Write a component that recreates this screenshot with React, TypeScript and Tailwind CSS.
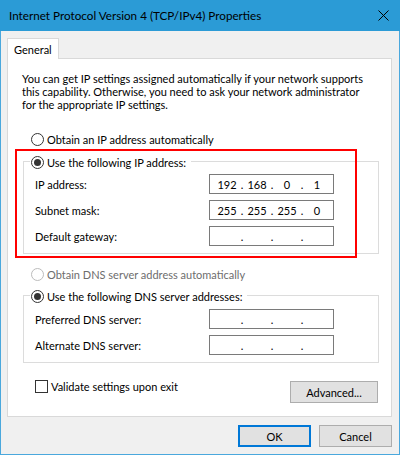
const FONT = "font-['Lato','Noto_Sans',sans-serif]";

type Octets = [string, string, string, string];

function Radio({ checked = false, disabled = false }: { checked?: boolean; disabled?: boolean }) {
  return (
    <span
      className={
        "flex h-[13px] w-[13px] shrink-0 items-center justify-center rounded-full border bg-white " +
        (disabled ? "border-[#bcbcbc]" : "border-[#333333]")
      }
    >
      {checked && <span className="h-[7px] w-[7px] rounded-full bg-[#333333]" />}
    </span>
  );
}

function IpBox({ value = ["", "", "", ""] }: { value?: Octets }) {
  return (
    <div className="flex h-[20px] w-[125px] items-center border border-[#7a7a7a] bg-white pl-[4px]">
      {value.map((o, i) => (
        <div key={i} className="flex items-center">
          <span className="w-[26px] text-center">{o}</span>
          {i < 3 && <span className="w-[4px] text-center">.</span>}
        </div>
      ))}
    </div>
  );
}

function FieldRow({ label, value }: { label: string; value?: Octets }) {
  return (
    <div className="flex h-[20px] items-center">
      <span className="ml-[11px] w-[174px]">{label}</span>
      <IpBox value={value} />
    </div>
  );
}

function Button({ children, primary = false, className = "" }: { children: string; primary?: boolean; className?: string }) {
  return (
    <div
      className={
        "flex items-center justify-center bg-[#e1e1e1] " +
        (primary ? "border-2 border-[#0078d7] " : "border border-[#adadad] ") +
        className
      }
    >
      {children}
    </div>
  );
}

export default function App() {
  return (
    <div className={`flex h-[455px] w-[400px] flex-col bg-[#f0f0f0] text-[11px] leading-[13px] text-black ${FONT}`}>
      {/* title bar */}
      <div className="flex h-[31px] shrink-0 items-center justify-between bg-[#2b9bd6] pl-[9px] pr-[11px]">
        <span className="text-[11.7px]">Internet Protocol Version 4 (TCP/IPv4) Properties</span>
        <svg width="11" height="11" viewBox="0 0 11 11" className="mt-[-1px]">
          <path d="M0.5 0.5 L10.5 10.5 M10.5 0.5 L0.5 10.5" stroke="#000" strokeWidth="1" />
        </svg>
      </div>

      <div className="flex flex-1 flex-col border-x border-b border-[#4aa8dd] pl-[6px] pr-[7px] pt-[7px]">
        {/* tab */}
        <div className="relative z-10 -mb-px flex h-[21px] w-[52px] items-center border border-b-0 border-[#d9d9d9] bg-white pl-[6px]">
          General
        </div>

        {/* tab page */}
        <div className="relative flex h-[359px] flex-col border border-[#d9d9d9] bg-white">
          <p className="ml-[14px] mt-[13px] whitespace-nowrap">
            You can get IP settings assigned automatically if your network supports
            <br />
            this capability. Otherwise, you need to ask your network administrator
            <br />
            for the appropriate IP settings.
          </p>

          <div className="ml-[23px] mt-[22px] flex h-[13px] items-center gap-[3px]">
            <Radio />
            <span>Obtain an IP address automatically</span>
          </div>

          <div className="ml-[15px] mt-[15px] h-[93px] w-[356px] border border-[#dcdcdc]">
            <div className="-mt-[6px] ml-[6px] flex h-[13px] w-fit items-center gap-[3px] bg-white pl-[1px] pr-[5px]">
              <Radio checked />
              <span>Use the following IP address:</span>
            </div>
            <div className="mt-[5px] flex flex-col gap-[6px]">
              <FieldRow label="IP address:" value={["192", "168", "0", "1"]} />
              <FieldRow label="Subnet mask:" value={["255", "255", "255", "0"]} />
              <FieldRow label="Default gateway:" />
            </div>
          </div>

          <div className="ml-[23px] mt-[14px] flex h-[13px] items-center gap-[3px] text-[#6d6d6d]">
            <Radio disabled />
            <span>Obtain DNS server address automatically</span>
          </div>

          <div className="ml-[15px] mt-[14px] h-[68px] w-[356px] border border-[#dcdcdc]">
            <div className="-mt-[6px] ml-[6px] flex h-[13px] w-fit items-center gap-[3px] bg-white pl-[1px] pr-[5px]">
              <Radio checked />
              <span>Use the following DNS server addresses:</span>
            </div>
            <div className="mt-[6px] flex flex-col gap-[6px]">
              <FieldRow label="Preferred DNS server:" />
              <FieldRow label="Alternate DNS server:" />
            </div>
          </div>

          <div className="mt-[17px] flex items-start justify-between pr-[13px]">
            <div className="ml-[27px] flex h-[13px] items-center gap-[3px]">
              <span className="h-[13px] w-[13px] border border-[#333333] bg-white" />
              <span>Validate settings upon exit</span>
            </div>
            <Button className="mt-[1px] h-[22px] w-[88px]">Advanced...</Button>
          </div>

          {/* annotation */}
          <div className="absolute left-[7px] top-[90px] h-[109px] w-[342px] border-2 border-[#ff0000]" />
        </div>

        <div className="mt-[8px] flex justify-end gap-[8px]">
          <Button primary className="h-[22px] w-[73px]">OK</Button>
          <Button className="h-[22px] w-[73px]">Cancel</Button>
        </div>
      </div>
    </div>
  );
}
